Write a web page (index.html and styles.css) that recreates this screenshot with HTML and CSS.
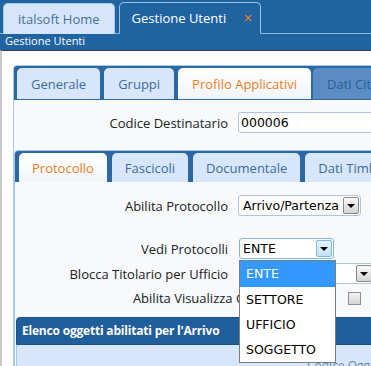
FILE: index.html
```html
<!DOCTYPE html>
<html lang="it">
<head>
<meta charset="utf-8">
<title>Gestione Utenti</title>
<link rel="stylesheet" href="styles.css">
</head>
<body>
<div class="topbar">
  <div class="doc-tabs">
    <div class="doc-tab">italsoft Home</div>
    <div class="doc-tab doc-tab-active">Gestione Utenti <span class="close">&#x2715;</span></div>
  </div>
  <div class="subtitle">Gestione Utenti</div>
</div>
<div class="content">
  <div class="panel outer">
    <div class="tabstrip">
      <div class="tab">Generale</div>
      <div class="tab">Gruppi</div>
      <div class="tab tab-active">Profilo Applicativi</div>
      <div class="tab tab-dim">Dati Cittadino</div>
    </div>
    <div class="panel-body outer-body">
      <div class="form-row">
        <label class="lbl">Codice Destinatario</label>
        <div class="field"><div class="input input-wide">000006</div></div>
      </div>
      <div class="panel inner">
        <div class="tabstrip inner-strip">
          <div class="tab tab-active">Protocollo</div>
          <div class="tab">Fascicoli</div>
          <div class="tab">Documentale</div>
          <div class="tab">Dati Timbro</div>
        </div>
        <div class="panel-body inner-body">
          <div class="form-row row-1">
            <label class="lbl">Abilita Protocollo</label>
            <div class="field">
              <div class="select sel-arrivo"><span class="sel-value">Arrivo/Partenza</span><span class="arrow"></span></div>
            </div>
          </div>
          <div class="form-row row-2">
            <label class="lbl">Vedi Protocolli</label>
            <div class="field">
              <div class="select sel-vedi focused"><span class="sel-value">ENTE</span><span class="arrow"></span></div>
              <ul class="dropdown">
                <li class="opt opt-selected">ENTE</li>
                <li class="opt">SETTORE</li>
                <li class="opt">UFFICIO</li>
                <li class="opt">SOGGETTO</li>
              </ul>
            </div>
          </div>
          <div class="form-row row-3">
            <label class="lbl">Blocca Titolario per Ufficio</label>
            <div class="field">
              <div class="select sel-blocca"><span class="sel-value">&nbsp;</span><span class="arrow"></span></div>
            </div>
          </div>
          <div class="form-row row-4">
            <label class="lbl">Abilita Visualizza Collegati</label>
            <div class="field field-check"><span class="checkbox"></span></div>
          </div>
          <div class="section">
            <div class="section-head">Elenco oggetti abilitati per l'Arrivo</div>
            <div class="section-body"><span class="col-head">Codice Oggetto</span></div>
          </div>
        </div>
      </div>
    </div>
  </div>
</div>
</body>
</html>
```

FILE: styles.css
```css
* { box-sizing: border-box; }
html, body {
  margin: 0;
  padding: 0;
  width: 371px;
  height: 366px;
  overflow: hidden;
  background: #ffffff;
  font-family: "Open Sans", "DejaVu Sans", sans-serif;
}

/* ---------- top bar ---------- */
.topbar {
  background: #2063a1;
  width: 371px;
}
.doc-tabs {
  display: flex;
  align-items: flex-end;
  gap: 4px;
  height: 34px;
  padding-left: 3px;
  border-bottom: 1px solid #8db6df;
}
.doc-tab {
  height: 31px;
  margin-bottom: -1px;
  padding: 0 14px;
  display: flex;
  align-items: center;
  font-size: 13px;
  color: #4a6f96;
  background: #d6e6fa;
  border: 1px solid #a9c8ea;
  border-bottom: none;
  border-radius: 5px 5px 0 0;
  white-space: nowrap;
}
.doc-tab-active {
  height: 32px;
  padding: 0 8px 0 12px;
  background: #2063a1;
  color: #ffffff;
  border: 1px solid #9cc2e8;
  border-bottom: 1px solid #2063a1;
}
.close {
  margin-left: 17px;
  color: #f07f1e;
  font-weight: bold;
  font-size: 11px;
  font-family: "DejaVu Sans", sans-serif;
}
.subtitle {
  height: 16px;
  padding-left: 5px;
  font-size: 11px;
  line-height: 14px;
  color: #ffffff;
}

/* ---------- content ---------- */
.content {
  border-top: 1px solid #3b3b3b;
  border-left: 2px solid #c9c9c9;
  padding: 14px 0 0 11px;
  height: 316px;
}
.panel {
  width: 430px;
  border: 1px solid #a6c9ea;
  border-radius: 4px 4px 0 0;
  background: #f7f9fc;
}
.tabstrip {
  display: flex;
  gap: 4px;
  background: #2b69a5;
  padding: 2px 0 0 3px;
  height: 34px;
  border-radius: 3px 3px 0 0;
}
.tab {
  height: 31px;
  padding: 0 14px;
  display: flex;
  align-items: center;
  font-size: 13px;
  color: #3d6c9c;
  background: #d7e6fa;
  border-radius: 5px 5px 0 0;
  white-space: nowrap;
}
.tab-active {
  color: #ec7d1f;
  background: linear-gradient(#ffffff, #f1f5f9);
}
.tab-dim {
  background: #5b8cc3;
  color: #2c5e95;
  margin-left: -2px;
}
.outer-body {
  padding: 12px 0 0 0;
}
.form-row {
  display: grid;
  grid-template-columns: 214px 1fr;
  column-gap: 10px;
  align-items: center;
  height: 20px;
}
.lbl {
  text-align: right;
  font-size: 13px;
  color: #222222;
  white-space: nowrap;
}
.field {
  position: relative;
  display: flex;
  align-items: center;
}
.input {
  height: 21px;
  border: 1px solid #a9c6e3;
  border-radius: 3px;
  background: #ffffff;
  font-family: "DejaVu Sans", sans-serif;
  font-size: 12.5px;
  line-height: 19px;
  padding-left: 2px;
  color: #000;
}
.input-wide { width: 180px; }

.inner {
  width: 420px;
  margin-top: 18px;
  border-color: #a6c9ea;
}
.inner-strip {
  height: 31px;
  gap: 5px;
  padding: 2px 0 0 4px;
}
.inner-strip .tab {
  height: 29px;
  padding: 0 13px;
}
.inner-body {
  padding: 13px 0 0 0;
}
.inner-body .form-row {
  grid-template-columns: 213px 1fr;
}
.inner-body .row-4 {
  grid-template-columns: 273px 1fr;
}
.row-2 { margin-top: 23px; }
.row-3 { margin-top: 5px; }
.row-4 { margin-top: 5px; }

.select {
  position: relative;
  height: 21px;
  border: 1px solid #a9c6e3;
  border-radius: 3px;
  background: #ffffff;
  display: flex;
  align-items: center;
  font-family: "DejaVu Sans", sans-serif;
  font-size: 12.5px;
  color: #000;
}
.sel-value { padding-left: 4px; flex: 1; white-space: nowrap; }
.arrow {
  width: 16px;
  height: 17px;
  margin-right: 1px;
  border: 1px solid #8a8a8a;
  border-radius: 2px;
  background: linear-gradient(#fafafa, #d4d4d4);
  position: relative;
}
.arrow::after {
  content: "";
  position: absolute;
  left: 3px;
  top: 6px;
  border-left: 4px solid transparent;
  border-right: 4px solid transparent;
  border-top: 4px solid #000;
}
.sel-arrivo { width: 123px; }
.sel-vedi { width: 95px; margin-left: 1px; }
.sel-vedi .sel-value { padding-left: 3px; }
.focused { border-color: #7fb4e4; }
.focused .arrow {
  border-color: #7fb4e4;
  background: linear-gradient(#e6f2fc, #c7e0f5);
}
.sel-blocca { width: 135px; margin-left: 1px; }

.dropdown {
  position: absolute;
  top: 22px;
  left: 1px;
  width: 97px;
  margin: 0;
  padding: 0;
  list-style: none;
  background: #ffffff;
  border: 1px solid #7d7d7d;
  z-index: 5;
  font-family: "DejaVu Sans", sans-serif;
  font-size: 12.5px;
}
.opt {
  height: 25px;
  line-height: 25px;
  padding-left: 6px;
  color: #000;
}
.opt-selected {
  height: 26px;
  background: #3399ff;
  color: #ffffff;
}

.field-check {
  height: 20px;
}
.checkbox {
  width: 13px;
  height: 13px;
  margin-left: 50px;
  border: 1px solid #8e8e8e;
  background: linear-gradient(#f4f4f4, #d6d6d6);
}

.section {
  margin: 9px 0 0 1px;
}
.section-head {
  height: 28px;
  background: #1f5e9b;
  border: 1px solid #1a5189;
  border-radius: 4px 4px 0 0;
  color: #ffffff;
  font-weight: bold;
  font-size: 12px;
  line-height: 26px;
  padding-left: 5px;
  letter-spacing: -0.2px;
}
.section-body {
  height: 30px;
  background: #d7e6fa;
  border-left: 1px solid #a6c9ea;
  padding: 12px 0 0 290px;
  font-size: 12px;
  color: #6c87a8;
}
.col-head { white-space: nowrap; }
```
